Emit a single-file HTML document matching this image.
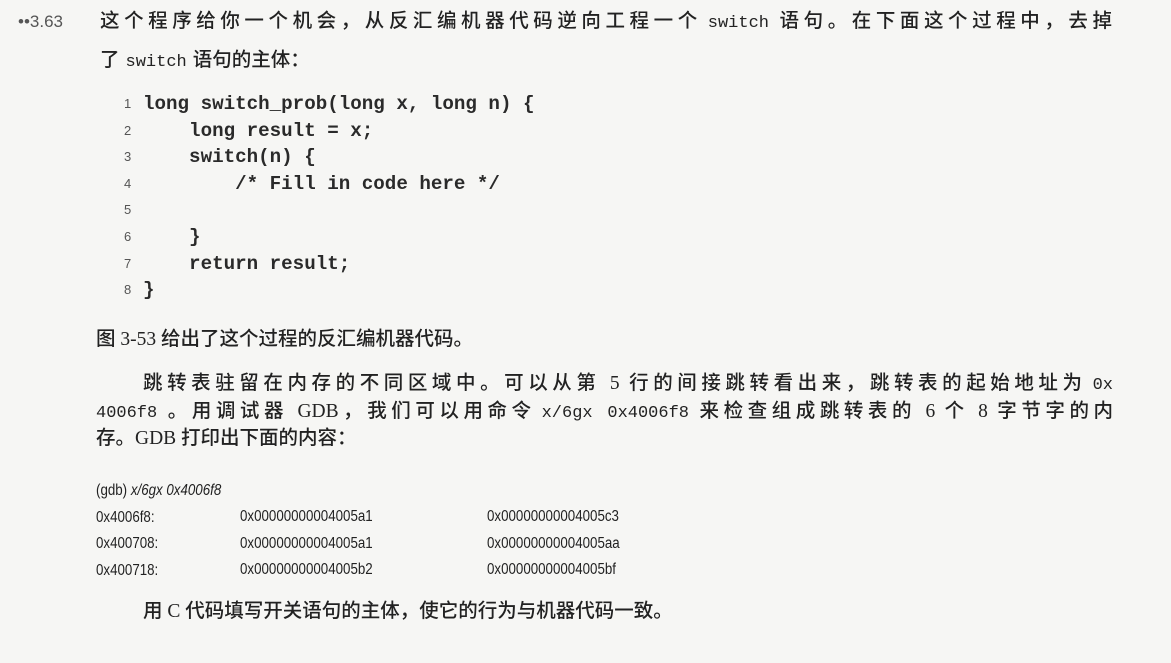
<!DOCTYPE html><html><head><meta charset="utf-8"><style>
body{margin:0;width:1171px;height:663px;background:#f6f6f4;position:relative;overflow:hidden;color:#222;font-family:"Liberation Serif","Noto Sans CJK SC",sans-serif}
.l{position:absolute;white-space:nowrap;font-size:19.5px;line-height:24px;font-weight:500}
.j{text-align:justify;text-align-last:justify;white-space:normal}
.s{font-family:"Liberation Mono",monospace;font-size:17px;font-weight:normal;margin:0 6px}
.c{position:absolute;font-family:"Liberation Mono",monospace;font-size:19.2px;line-height:26.6px;white-space:pre;font-weight:bold;color:#2a2a2a;left:143px;top:91px}
.n{position:absolute;left:124px;top:91px;font-family:"Liberation Sans",sans-serif;font-size:13px;line-height:26.6px;color:#555;white-space:pre}
.g{position:absolute;font-family:"Liberation Sans",sans-serif;font-size:15.5px;line-height:26.5px;white-space:pre;color:#222;transform:scaleX(.86);transform-origin:0 0}
</style></head><body>
<div class="l" style="left:18px;top:10px;font-family:'Liberation Sans',sans-serif;font-size:17px;color:#555;font-weight:normal">••3.63</div>
<div class="l j" style="left:100px;top:10px;width:1012px">这个程序给你一个机会，从反汇编机器代码逆向工程一个<span class="s">switch</span>语句。在下面这个过程中，去掉</div>
<div class="l" style="left:100px;top:49px">了<span class="s">switch</span>语句的主体：</div>
<div class="n">1
2
3
4
5
6
7
8</div>
<div class="c">long switch_prob(long x, long n) {
    long result = x;
    switch(n) {
        /* Fill in code here */

    }
    return result;
}</div>
<div class="l" style="left:96px;top:328px">图 3-53 给出了这个过程的反汇编机器代码。</div>
<div class="l j" style="left:143px;top:372px;width:970px">跳转表驻留在内存的不同区域中。可以从第 5 行的间接跳转看出来，跳转表的起始地址为<span class="s" style="margin-right:0">0x</span></div>
<div class="l j" style="left:96px;top:400px;width:1017px"><span class="s" style="margin-left:0">4006f8</span>。用调试器 GDB，我们可以用命令<span class="s">x/6gx 0x4006f8</span>来检查组成跳转表的 6 个 8 字节字的内</div>
<div class="l" style="left:96px;top:427px">存。GDB 打印出下面的内容：</div>
<div class="g" style="left:96px;top:478px">(gdb) <i>x/6gx 0x4006f8</i>
0x4006f8:
0x400708:
0x400718:</div>
<div class="g" style="left:240px;top:504px">0x00000000004005a1
0x00000000004005a1
0x00000000004005b2</div>
<div class="g" style="left:487px;top:504px">0x00000000004005c3
0x00000000004005aa
0x00000000004005bf</div>
<div class="l" style="left:143px;top:600px">用 C 代码填写开关语句的主体，使它的行为与机器代码一致。</div>
</body></html>
